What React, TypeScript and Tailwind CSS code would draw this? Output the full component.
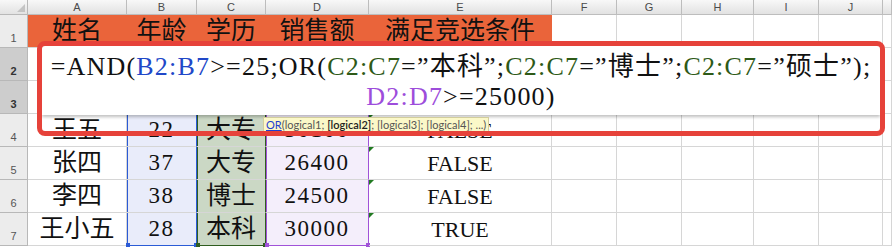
import { clsx } from "clsx";

type Col = { key: string; w: string };

const COLS: Col[] = [
  { key: "A", w: "w-[99px]" },
  { key: "B", w: "w-[70px]" },
  { key: "C", w: "w-[69px]" },
  { key: "D", w: "w-[103px]" },
  { key: "E", w: "w-[183px]" },
  { key: "F", w: "w-[65px]" },
  { key: "G", w: "w-[65px]" },
  { key: "H", w: "w-[72px]" },
  { key: "I", w: "w-[65px]" },
  { key: "J", w: "w-[64px]" },
  { key: "", w: "w-[9px]" },
];

const ROWS: Record<number, string[]> = {
  1: ["姓名", "年龄", "学历", "销售额", "满足竞选条件"],
  2: [],
  3: [],
  4: ["王五", "22", "大专", "30100", "FALSE"],
  5: ["张四", "37", "大专", "26400", "FALSE"],
  6: ["李四", "38", "博士", "24500", "FALSE"],
  7: ["王小五", "28", "本科", "30000", "TRUE"],
};

// highlighted formula ranges (rows 2-7)
const RANGE: Record<string, { cell: string; edge: string; dot: string }> = {
  B: {
    cell: "bg-[#e9ecfa] border-r-[#2b5bd6] shadow-[inset_1px_0_0_#2b5bd6]",
    edge: "border-b-[#2b5bd6]",
    dot: "bg-[#2b5bd6]",
  },
  C: {
    cell: "bg-[#cbd8c5] border-r-[#2f5d1f] shadow-[inset_1px_0_0_#2f5d1f]",
    edge: "border-b-[#2f5d1f]",
    dot: "bg-[#2f5d1f]",
  },
  D: {
    cell: "bg-[#f4eefb] border-r-[#a052d8] shadow-[inset_1px_0_0_#a052d8]",
    edge: "border-b-[#a052d8]",
    dot: "bg-[#a052d8]",
  },
};

const isNumeric = (v: string) => /^\d+$/.test(v);
const isBool = (v: string) => v === "TRUE" || v === "FALSE";

function ColumnHeader() {
  return (
    <div className="flex h-[15px]">
      <div className="relative w-[28px] shrink-0 border-r border-b border-[#b8b8b8] bg-linear-to-b from-[#f8f8f8] to-[#e2e2e2]">
        <svg className="absolute right-[2px] bottom-[2px]" width="8" height="8" viewBox="0 0 8 8">
          <path d="M8 0 L8 8 L0 8 Z" fill="#c4c4c4" />
        </svg>
      </div>
      {COLS.map((c) => (
        <div
          key={c.key + c.w}
          className={clsx(
            c.w,
            "shrink-0 border-r border-b border-[#bdbdbd] bg-linear-to-b from-[#f8f8f8] to-[#e2e2e2]",
            "flex items-center justify-center text-[11px] leading-none text-[#4a4a4a]"
          )}
          style={{ fontFamily: '"Liberation Sans", Arial, sans-serif' }}
        >
          {c.key}
        </div>
      ))}
    </div>
  );
}

function Row({ n }: { n: number }) {
  const values = ROWS[n] ?? [];
  const selected = n === 2 || n === 3;

  return (
    <div className="flex h-[33px]">
      <div
        className={clsx(
          "w-[28px] shrink-0 border-r border-b border-[#b8b8b8] flex items-end justify-center pb-[3px] text-[11px] leading-none",
          selected ? "bg-[#cdcdcd] font-bold text-[#333]" : "bg-[#ececec] text-[#555]"
        )}
        style={{ fontFamily: '"Liberation Sans", Arial, sans-serif' }}
      >
        {n}
      </div>
      {COLS.map((c, i) => {
        const v = values[i] ?? "";
        const range = n >= 2 && RANGE[c.key];
        const header = n === 1 && i < 5;
        return (
          <div
            key={c.key + c.w}
            className={clsx(
              c.w,
              "relative shrink-0 border-r border-b border-[#d6d6d6] flex items-center justify-center text-[#111] whitespace-nowrap",
              header && "bg-[#ea643a] border-r-transparent",
              range && range.cell,
              range && n === 7 && range.edge,
              isNumeric(v) && "text-[23px] tracking-[1.5px]",
              isBool(v) && "text-[22px]",
              !isNumeric(v) && !isBool(v) && "text-[25px]"
            )}
            style={{ fontFamily: '"Liberation Serif", "Noto Sans CJK SC", serif' }}
          >
            {v}
            {c.key === "E" && n >= 4 && (
              <span className="absolute top-0 left-0 w-0 h-0 border-t-[5px] border-r-[5px] border-t-[#217a21] border-r-transparent" />
            )}
            {range && n === 7 && (
              <>
                <span className={clsx("absolute -bottom-[2px] left-[-1px] size-[4px]", range.dot)} />
                <span className={clsx("absolute -bottom-[2px] right-[-2px] size-[4px]", range.dot)} />
              </>
            )}
          </div>
        );
      })}
    </div>
  );
}

function Formula() {
  const blue = "text-[#2148c8]";
  const green = "text-[#2e5a17]";
  const purple = "text-[#9d4ddb]";
  return (
    <div
      className="text-center text-[26px] leading-[30px] tracking-[1.2px] text-[#111] pt-[6px]"
      style={{ fontFamily: '"Liberation Serif", "Noto Sans CJK SC", serif' }}
    >
      <div className="whitespace-nowrap">
        =AND(<span className={blue}>B2:B7</span>&gt;=25;OR(
        <span className={green}>C2:C7</span>=”本科”;
        <span className={green}>C2:C7</span>=”博士”;
        <span className={green}>C2:C7</span>=”硕士”);
      </div>
      <div className="whitespace-nowrap">
        <span className={purple}>D2:D7</span>&gt;=25000)
      </div>
    </div>
  );
}

export default function App() {
  return (
    <div className="relative w-[892px] h-[247px] overflow-hidden bg-white">
      <ColumnHeader />
      {[1, 2, 3, 4, 5, 6, 7].map((n) => (
        <Row key={n} n={n} />
      ))}

      {/* in-cell editor */}
      <div className="absolute left-[42px] top-[46px] w-[838px] h-[69px] bg-white shadow-[0_2px_3px_rgba(0,0,0,0.25)]">
        <Formula />
      </div>

      {/* function tooltip */}
      <div
        className="absolute left-[263px] top-[117px] h-[15px] px-[2px] bg-[#fbf8c8] border border-[#d2cd9c] text-[11px] leading-[13px] text-[#555] whitespace-pre"
        style={{ fontFamily: '"Lato", "Liberation Sans", sans-serif' }}
      >
        <span className="text-[#1f3fd1] underline">OR</span>(logical1; <span className="text-[#222] font-semibold">[logical2]</span>; [logical3]; [logical4]; ...)
      </div>

      {/* annotation frame */}
      <div className="absolute left-[37px] top-[41px] w-[848px] h-[95px] border-[5px] border-[#e6423a] rounded-[8px]" />
    </div>
  );
}
